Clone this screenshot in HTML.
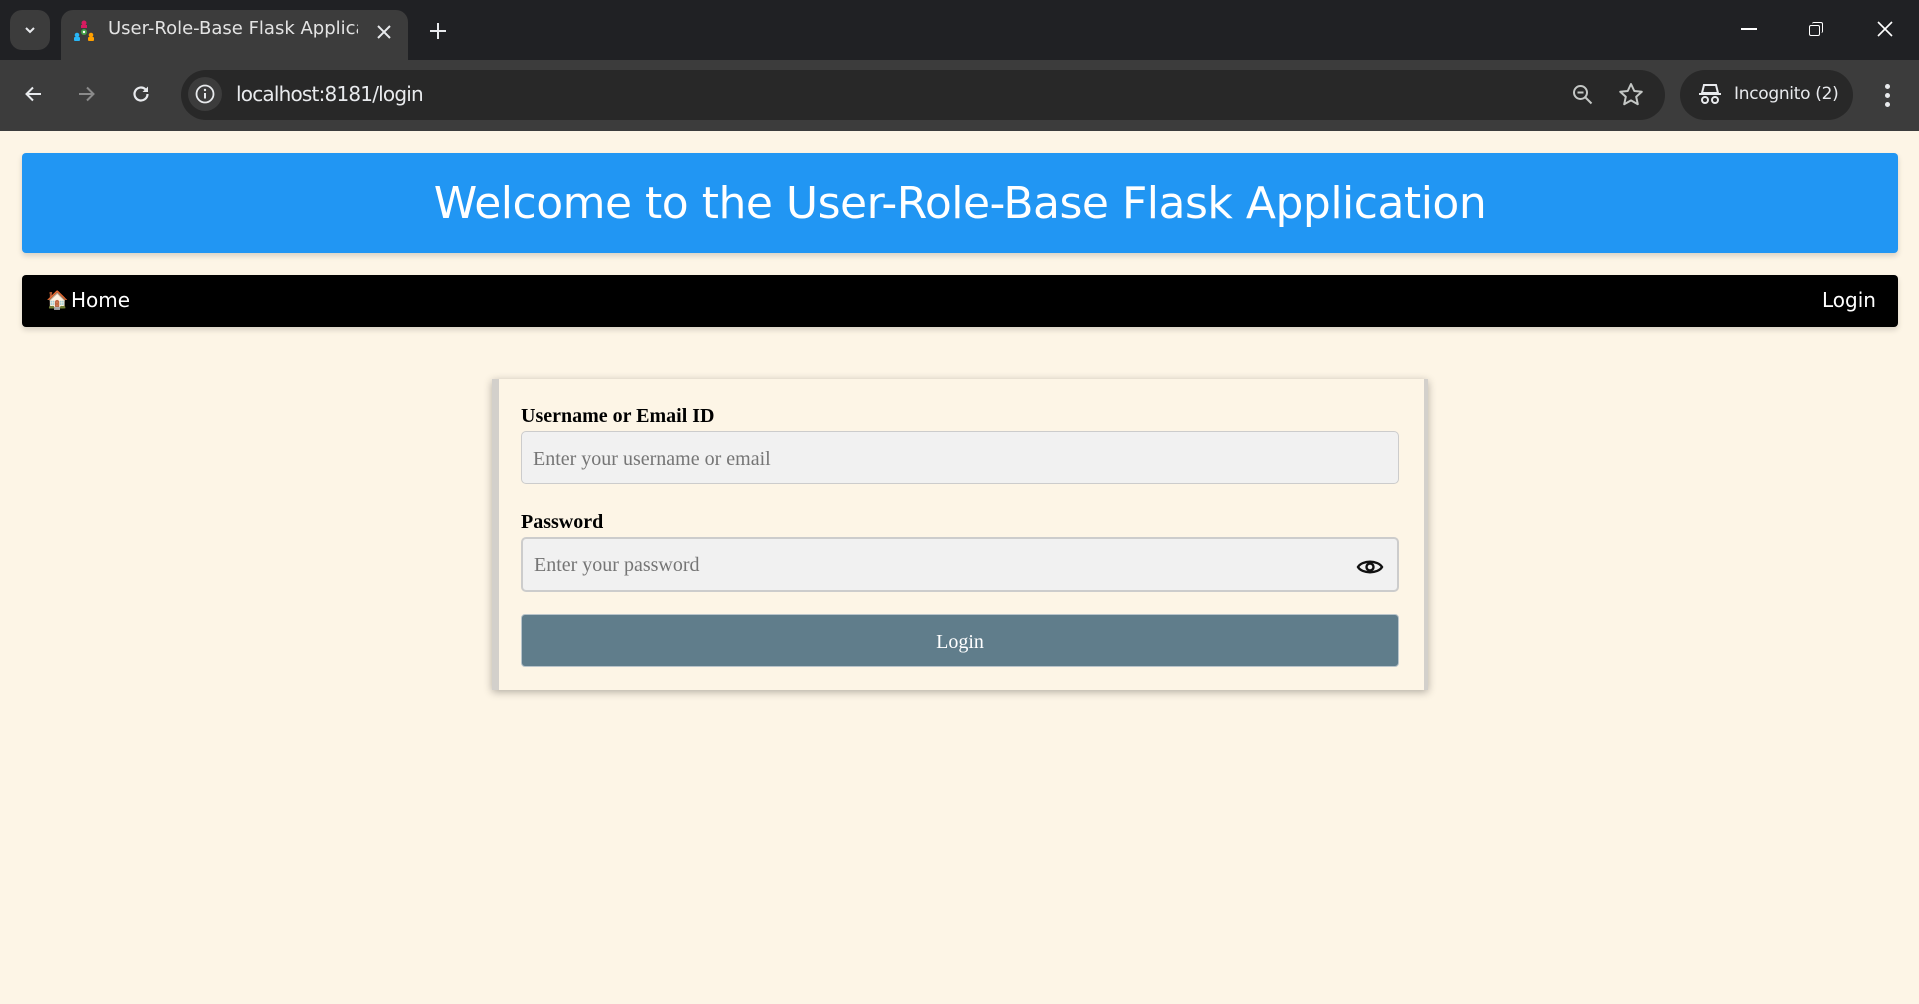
<!DOCTYPE html>
<html><head><meta charset="utf-8"><style>
*{box-sizing:border-box;margin:0;padding:0}
html,body{width:1919px;height:1004px;overflow:hidden;background:#fdf5e6;font-family:"Liberation Serif",serif}
.abs{position:absolute}
#tabs{left:0;top:0;width:1919px;height:60px;background:#202124}
#tb{left:0;top:60px;width:1919px;height:71px;background:#3c3c3c}
.ui{font-family:"DejaVu Sans","Liberation Sans",sans-serif;color:#e8eaed}
</style></head><body>
<div id="tabs" class="abs"></div>
<div class="abs" style="left:10px;top:10px;width:40px;height:40px;border-radius:12px;background:#3c3c3c"></div>
<svg class="abs" style="left:22px;top:22px" width="16" height="16"><path d="M4 6l4 4 4-4" stroke="#e8eaed" stroke-width="2" fill="none"/></svg>
<div class="abs" style="left:61px;top:10px;width:347px;height:52px;border-radius:12px 12px 0 0;background:#3c3c3c"></div>
<svg class="abs" style="left:72px;top:19px" width="24" height="24"><circle cx="12" cy="4" r="2.5" fill="#d81b60"/><rect x="9" y="6" width="6" height="3" fill="#d81b60"/><circle cx="12" cy="13" r="3" fill="#43a047"/><circle cx="12" cy="13" r="1.2" fill="#fff"/><circle cx="5" cy="16" r="2.3" fill="#29b6f6"/><rect x="2" y="18" width="6" height="4" rx="1" fill="#29b6f6"/><circle cx="19" cy="16" r="2.3" fill="#ffa000"/><rect x="16" y="18" width="6" height="4" rx="1" fill="#ffa000"/></svg>
<div class="abs ui" style="left:108px;top:18px;font-size:18px;white-space:nowrap;width:250px;overflow:hidden;color:#e3e3e3">User-Role-Base Flask Application</div>
<svg class="abs" style="left:377px;top:25px" width="14" height="14"><path d="M1 1l12 12M13 1L1 13" stroke="#e8eaed" stroke-width="2"/></svg>
<svg class="abs" style="left:429px;top:22px" width="18" height="18"><path d="M9 1v16M1 9h16" stroke="#e8eaed" stroke-width="2"/></svg>
<div class="abs" style="left:1741px;top:28px;width:16px;height:2px;background:#fff"></div>
<div class="abs" style="left:1809px;top:25px;width:11px;height:11px;border:1.5px solid #fff;border-radius:2px"></div>
<div class="abs" style="left:1812px;top:22px;width:11px;height:11px;border-top:1.5px solid #fff;border-right:1.5px solid #fff;border-radius:2px"></div>
<svg class="abs" style="left:1877px;top:21px" width="16" height="16"><path d="M1 1l14 14M15 1L1 15" stroke="#fff" stroke-width="1.6"/></svg>

<div id="tb" class="abs"></div>
<svg class="abs" style="left:23px;top:84px" width="20" height="20"><path d="M18 10H4M10 3.5l-6.5 6.5 6.5 6.5" stroke="#e8eaed" stroke-width="2" fill="none"/></svg>
<svg class="abs" style="left:77px;top:84px" width="20" height="20"><path d="M2 10h14M10 3.5l6.5 6.5-6.5 6.5" stroke="#8a8a8a" stroke-width="2" fill="none"/></svg>
<svg class="abs" style="left:131px;top:84px" width="20" height="20"><path d="M16.5 10a6.5 6.5 0 1 1-2-4.7" stroke="#e8eaed" stroke-width="2.2" fill="none"/><path d="M17 2.5v5.5h-5.5z" fill="#e8eaed"/></svg>
<div class="abs" style="left:181px;top:70px;width:1484px;height:50px;border-radius:25px;background:#282828"></div>
<div class="abs" style="left:188px;top:77px;width:34px;height:34px;border-radius:17px;background:#3c3c3c"></div>
<svg class="abs" style="left:195px;top:84px" width="20" height="20"><circle cx="10" cy="10" r="8.5" stroke="#e8eaed" stroke-width="1.8" fill="none"/><path d="M10 9v5.5" stroke="#e8eaed" stroke-width="2"/><circle cx="10" cy="6" r="1.2" fill="#e8eaed"/></svg>
<div class="abs ui" style="left:236px;top:82px;font-size:20px;font-family:'DejaVu Sans',sans-serif;letter-spacing:-0.8px">localhost:8181/login</div>
<svg class="abs" style="left:1571px;top:83px" width="24" height="24"><circle cx="9.5" cy="9.5" r="6.5" stroke="#c4c7c5" stroke-width="2" fill="none"/><path d="M6.5 9.5h6M14.5 14.5l6 6" stroke="#c4c7c5" stroke-width="2"/></svg>
<svg class="abs" style="left:1618px;top:82px" width="26" height="26"><path d="M13 2l3.3 7 7.5.8-5.6 5 1.6 7.4L13 18.4l-6.8 3.8 1.6-7.4-5.6-5 7.5-.8z" stroke="#c4c7c5" stroke-width="2" fill="none" stroke-linejoin="round"/></svg>
<div class="abs" style="left:1680px;top:70px;width:173px;height:50px;border-radius:25px;background:#282828"></div>
<svg class="abs" style="left:1698px;top:83px" width="24" height="22"><path d="M6 2h12l2 8H4z" fill="none" stroke="#e8eaed" stroke-width="2"/><path d="M1 11h22" stroke="#e8eaed" stroke-width="2"/><circle cx="7" cy="17" r="3" stroke="#e8eaed" stroke-width="2" fill="none"/><circle cx="17" cy="17" r="3" stroke="#e8eaed" stroke-width="2" fill="none"/></svg>
<div class="abs ui" style="left:1734px;top:84px;font-size:17px;font-family:'DejaVu Sans',sans-serif;letter-spacing:-0.3px">Incognito (2)</div>
<div class="abs" style="left:1885px;top:84px;width:5px;height:5px;border-radius:3px;background:#e8eaed;box-shadow:0 9px 0 #e8eaed,0 18px 0 #e8eaed"></div>

<div class="abs" style="left:22px;top:153px;width:1876px;height:100px;background:#2196f3;border-radius:4px;box-shadow:0 3px 6px rgba(0,0,0,.15);color:#fff;font-family:'DejaVu Sans','Liberation Sans',sans-serif;font-size:44px;text-align:center;line-height:102px;letter-spacing:-0.5px">Welcome to the User-Role-Base Flask Application</div>
<div class="abs" style="left:22px;top:275px;width:1876px;height:52px;background:#000;border-radius:4px;box-shadow:0 3px 6px rgba(0,0,0,.15)"></div>
<div class="abs" style="left:46px;top:290px;font-size:18px">🏠</div>
<div class="abs" style="left:71px;top:288px;color:#fff;font-family:'DejaVu Sans',sans-serif;font-size:20px">Home</div>
<div class="abs" style="left:1822px;top:288px;color:#fff;font-family:'DejaVu Sans',sans-serif;font-size:20px">Login</div>

<div class="abs" style="left:492px;top:379px;width:936px;height:311px;background:#fdf5e6;box-shadow:0 2px 8px rgba(0,0,0,.3);border-left:7px solid #d3d0cb;border-right:4px solid #d3d0cb"></div>
<div class="abs" style="left:521px;top:405px;font-weight:bold;font-size:20px">Username or Email ID</div>
<div class="abs" style="left:521px;top:431px;width:878px;height:53px;background:#f1f1f1;border:1.5px solid #ccc;border-radius:5px;padding-left:11px;line-height:54px;font-size:20px;color:#757575">Enter your username or email</div>
<div class="abs" style="left:521px;top:511px;font-weight:bold;font-size:20px">Password</div>
<div class="abs" style="left:521px;top:537px;width:878px;height:55px;background:#f1f1f1;border:2.5px solid #ccc;border-radius:5px;padding-left:11px;line-height:53px;font-size:20px;color:#757575">Enter your password</div>
<svg class="abs" style="left:1356px;top:556px" width="28" height="22"><path d="M2 11C6 4 22 4 26 11C22 18 6 18 2 11z" stroke="#111" stroke-width="2.4" fill="none"/><circle cx="14" cy="11" r="3.5" stroke="#111" stroke-width="2.4" fill="none"/></svg>
<div class="abs" style="left:521px;top:614px;width:878px;height:53px;background:#607d8b;border:1px solid #b9c4ca;border-radius:4px;color:#fff;font-size:20px;text-align:center;line-height:54px">Login</div>
</body></html>
